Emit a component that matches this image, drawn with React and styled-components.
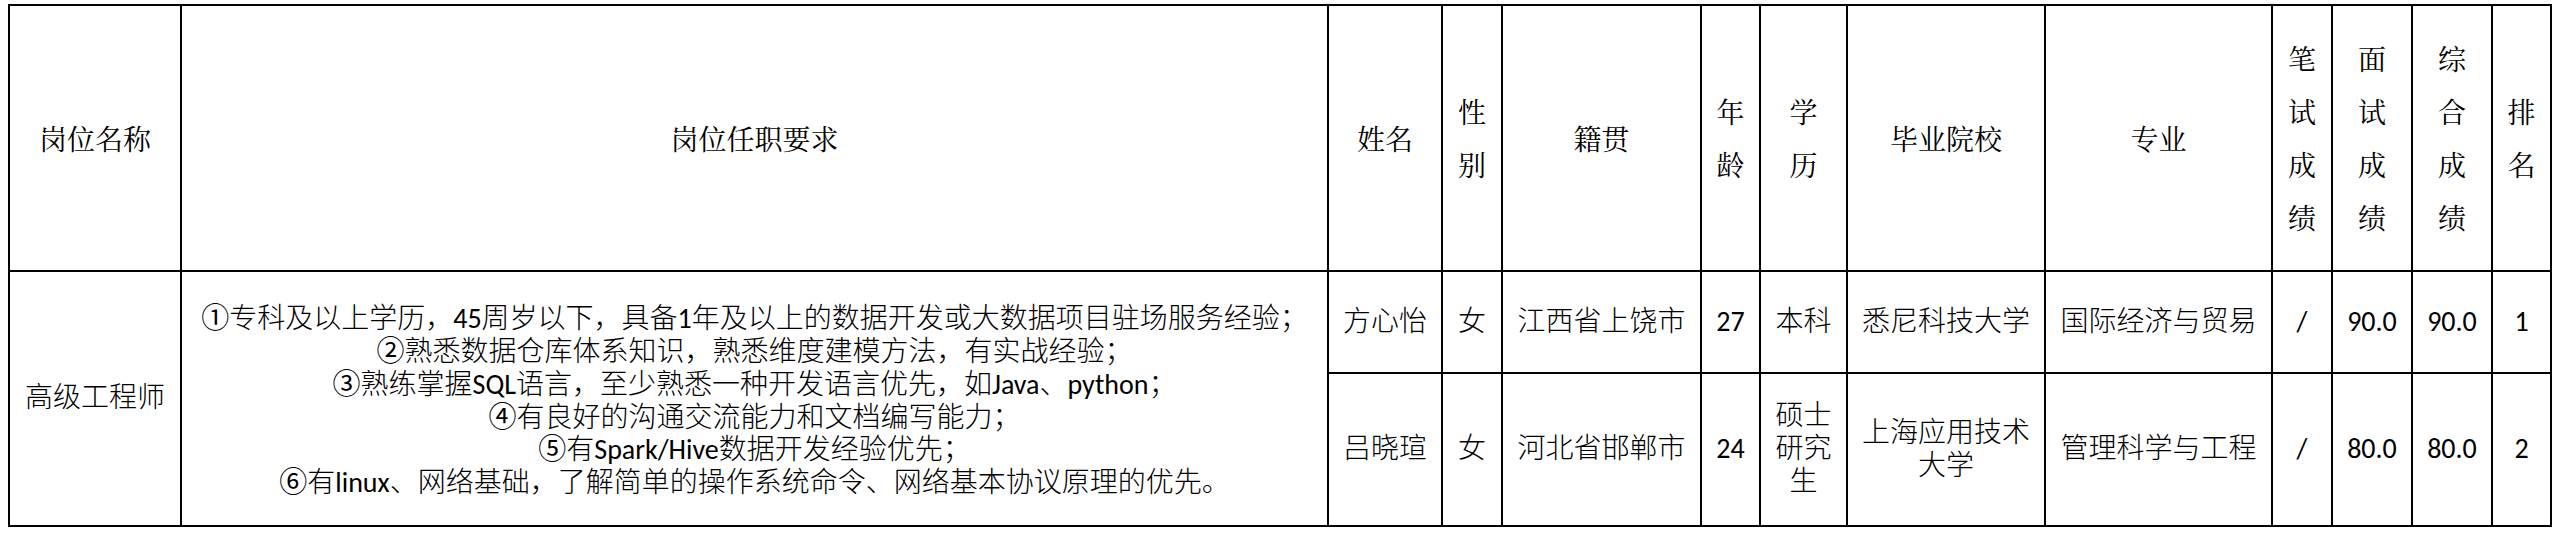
import React from "react";
import styled, { createGlobalStyle } from "styled-components";

const GlobalStyles = createGlobalStyle`
  html, body {
    margin: 0;
    padding: 0;
    background: #ffffff;
  }
`;

const Page = styled.div`
  padding: 4px 0 0 8px;
`;

const Sheet = styled.table`
  border-collapse: collapse;
  table-layout: fixed;
  width: 2544px;
  color: #000000;
`;

const HeadRow = styled.tr`
  height: 266px;
`;

const BodyRow = styled.tr`
  height: ${(p) => p.$height}px;
`;

const HeadCell = styled.th`
  border: 2px solid #000000;
  padding: 0 8px;
  font-family: "Noto Serif CJK SC", "Noto Sans CJK SC", serif;
  font-weight: 400;
  font-size: 28px;
  line-height: 53px;
  text-align: center;
  vertical-align: middle;
`;

const Cell = styled.td`
  border: 2px solid #000000;
  padding: ${(p) => (p.$pad === undefined ? "0 8px" : p.$pad)};
  font-family: "Carlito", "Noto Sans CJK SC", sans-serif;
  font-weight: 300;
  font-size: 28px;
  line-height: 32.7px;
  text-align: center;
  vertical-align: middle;
`;

const Num = styled.span`
  font-family: "Carlito", "Open Sans", "Noto Sans CJK SC", sans-serif;
  font-weight: 400;
`;

const Circled = styled.span`
  font-family: "Noto Sans CJK SC", sans-serif;
  font-weight: 400;
`;

const StackChar = styled.span`
  display: block;
`;

const ReqLine = styled.div`
  white-space: nowrap;
  height: 32.7px;
`;

const Stack = ({ text }) => (
  <>
    {text.split("").map((c, i) => (
      <StackChar key={i}>{c}</StackChar>
    ))}
  </>
);

const columns = [172, 1147, 114, 60, 199, 59, 87, 198, 227, 60, 80, 80, 59];

const headers = [
  { label: "岗位名称" },
  { label: "岗位任职要求" },
  { label: "姓名" },
  { label: "性别", stack: true },
  { label: "籍贯" },
  { label: "年龄", stack: true },
  { label: "学历", stack: true },
  { label: "毕业院校" },
  { label: "专业" },
  { label: "笔试成绩", stack: true },
  { label: "面试成绩", stack: true },
  { label: "综合成绩", stack: true },
  { label: "排名", stack: true },
];

const requirements = [
  ["①", "专科及以上学历，45周岁以下，具备1年及以上的数据开发或大数据项目驻场服务经验；"],
  ["②", "熟悉数据仓库体系知识，熟悉维度建模方法，有实战经验；"],
  ["③", "熟练掌握SQL语言，至少熟悉一种开发语言优先，如Java、python；"],
  ["④", "有良好的沟通交流能力和文档编写能力；"],
  ["⑤", "有Spark/Hive数据开发经验优先；"],
  ["⑥", "有linux、网络基础，了解简单的操作系统命令、网络基本协议原理的优先。"],
];

const candidates = [
  {
    name: "方心怡",
    gender: "女",
    origin: "江西省上饶市",
    age: "27",
    degree: "本科",
    school: "悉尼科技大学",
    major: "国际经济与贸易",
    written: "/",
    interview: "90.0",
    total: "90.0",
    rank: "1",
    height: 102,
  },
  {
    name: "吕晓瑄",
    gender: "女",
    origin: "河北省邯郸市",
    age: "24",
    degree: "硕士研究生",
    school: "上海应用技术大学",
    major: "管理科学与工程",
    written: "/",
    interview: "80.0",
    total: "80.0",
    rank: "2",
    height: 153,
  },
];

export default function App() {
  return (
    <Page>
      <GlobalStyles />
      <Sheet>
        <colgroup>
          {columns.map((w, i) => (
            <col key={i} style={{ width: w }} />
          ))}
        </colgroup>
        <thead>
          <HeadRow>
            {headers.map((h) => (
              <HeadCell key={h.label}>
                {h.stack ? <Stack text={h.label} /> : h.label}
              </HeadCell>
            ))}
          </HeadRow>
        </thead>
        <tbody>
          {candidates.map((c, i) => (
            <BodyRow key={c.name} $height={c.height}>
              {i === 0 && (
                <>
                  <Cell rowSpan={2}>高级工程师</Cell>
                  <Cell rowSpan={2} $pad="0">
                    {requirements.map(([mark, line]) => (
                      <ReqLine key={mark}>
                        <Circled>{mark}</Circled>
                        {line}
                      </ReqLine>
                    ))}
                  </Cell>
                </>
              )}
              <Cell>{c.name}</Cell>
              <Cell>{c.gender}</Cell>
              <Cell>{c.origin}</Cell>
              <Cell>
                <Num>{c.age}</Num>
              </Cell>
              <Cell>{c.degree}</Cell>
              <Cell>{c.school}</Cell>
              <Cell>{c.major}</Cell>
              <Cell>
                <Num>{c.written}</Num>
              </Cell>
              <Cell>
                <Num>{c.interview}</Num>
              </Cell>
              <Cell>
                <Num>{c.total}</Num>
              </Cell>
              <Cell>
                <Num>{c.rank}</Num>
              </Cell>
            </BodyRow>
          ))}
        </tbody>
      </Sheet>
    </Page>
  );
}
